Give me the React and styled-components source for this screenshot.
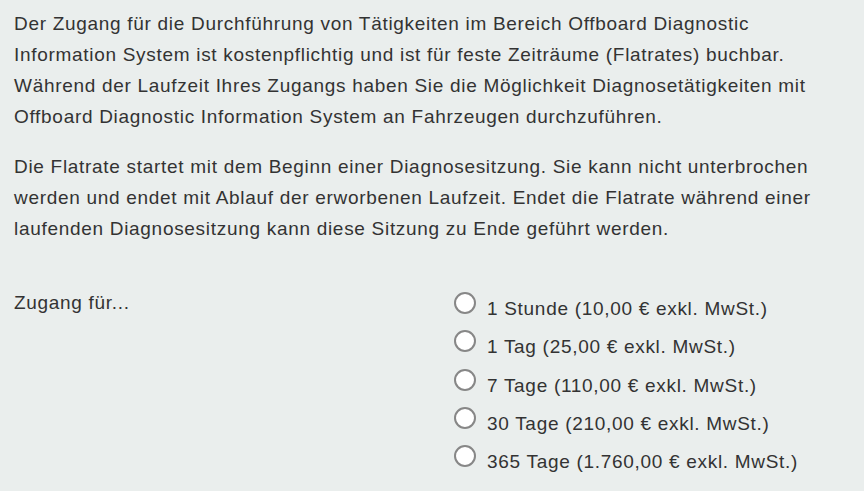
import styled, { createGlobalStyle } from 'styled-components';

const GlobalStyle = createGlobalStyle`
	html, body {
		margin: 0;
		padding: 0;
		background: #eaeeed;
	}
	body {
		font-family: "Liberation Sans", Arial, sans-serif;
		color: #333333;
	}
`;

const Page = styled.div`
	width: 864px;
	height: 491px;
	box-sizing: border-box;
	padding: 8px 14px 0 14px;
	background: #eaeeed;
	overflow: hidden;
	font-size: 19px;
	letter-spacing: 0.7px;
	line-height: 31px;
`;

const Paragraph = styled.p`
	margin: 0 0 19px 0;
`;

const AccessForm = styled.div`
	display: grid;
	grid-template-columns: 440px 1fr;
	align-items: start;
	margin-top: 43px;
`;

const AccessLabel = styled.div`
	line-height: 31px;
`;

const OptionList = styled.div`
	display: flex;
	flex-direction: column;
	padding-top: 5px;
`;

const Option = styled.label`
	display: flex;
	align-items: flex-start;
	gap: 11px;
	height: 38.3px;
	cursor: pointer;
`;

const Radio = styled.input.attrs({ type: 'radio' })`
	appearance: none;
	-webkit-appearance: none;
	margin: 0;
	flex: none;
	width: 22px;
	height: 22px;
	box-sizing: border-box;
	border: 2px solid #878787;
	border-radius: 50%;
	background: #ffffff;
	cursor: pointer;

	&:checked {
		background: radial-gradient(circle, #333 0 5px, #fff 6px);
	}
`;

const OptionText = styled.span`
	line-height: 31px;
	margin-top: 1px;
`;

const options = [
	{ id: '1h', label: '1 Stunde (10,00 € exkl. MwSt.)' },
	{ id: '1d', label: '1 Tag (25,00 € exkl. MwSt.)' },
	{ id: '7d', label: '7 Tage (110,00 € exkl. MwSt.)' },
	{ id: '30d', label: '30 Tage (210,00 € exkl. MwSt.)' },
	{ id: '365d', label: '365 Tage (1.760,00 € exkl. MwSt.)' },
];

export default function App() {
	return (
		<>
			<GlobalStyle />
			<Page>
				<Paragraph>
					Der Zugang für die Durchführung von Tätigkeiten im Bereich Offboard Diagnostic
					<br />
					Information System ist kostenpflichtig und ist für feste Zeiträume (Flatrates) buchbar.
					<br />
					Während der Laufzeit Ihres Zugangs haben Sie die Möglichkeit Diagnosetätigkeiten mit
					<br />
					Offboard Diagnostic Information System an Fahrzeugen durchzuführen.
				</Paragraph>
				<Paragraph>
					Die Flatrate startet mit dem Beginn einer Diagnosesitzung. Sie kann nicht unterbrochen
					<br />
					werden und endet mit Ablauf der erworbenen Laufzeit. Endet die Flatrate während einer
					<br />
					laufenden Diagnosesitzung kann diese Sitzung zu Ende geführt werden.
				</Paragraph>
				<AccessForm>
					<AccessLabel>Zugang für...</AccessLabel>
					<OptionList>
						{options.map((o) => (
							<Option key={o.id}>
								<Radio name="flatrate" value={o.id} />
								<OptionText>{o.label}</OptionText>
							</Option>
						))}
					</OptionList>
				</AccessForm>
			</Page>
		</>
	);
}
